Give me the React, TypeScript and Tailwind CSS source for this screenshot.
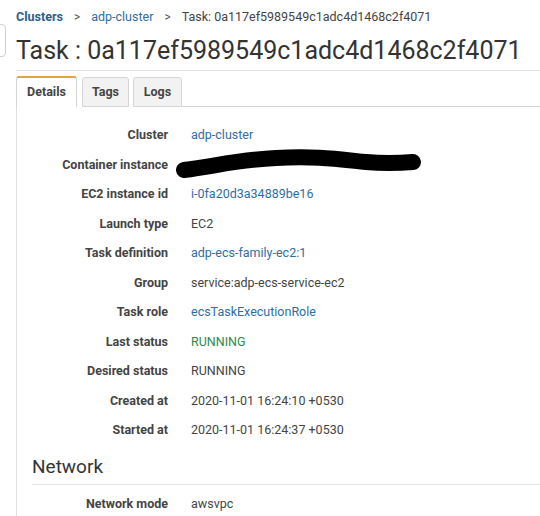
import React from "react";

const rows: { label: string; value: string; kind: "link" | "text" | "green" | "redact" }[] = [
  { label: "Cluster", value: "adp-cluster", kind: "link" },
  { label: "Container instance", value: "", kind: "redact" },
  { label: "EC2 instance id", value: "i-0fa20d3a34889be16", kind: "link" },
  { label: "Launch type", value: "EC2", kind: "text" },
  { label: "Task definition", value: "adp-ecs-family-ec2:1", kind: "link" },
  { label: "Group", value: "service:adp-ecs-service-ec2", kind: "text" },
  { label: "Task role", value: "ecsTaskExecutionRole", kind: "link" },
  { label: "Last status", value: "RUNNING", kind: "green" },
  { label: "Desired status", value: "RUNNING", kind: "text" },
  { label: "Created at", value: "2020-11-01 16:24:10 +0530", kind: "text" },
  { label: "Started at", value: "2020-11-01 16:24:37 +0530", kind: "text" },
];

function Row({ label, value, kind }: (typeof rows)[number]) {
  return (
    <div className="flex items-center h-[29.5px]">
      <div className="w-[151px] shrink-0 text-right font-bold text-[#444]">{label}</div>
      <div className="relative ml-[23px] flex-1 h-full flex items-center">
        {kind === "link" && <span className="text-[#2f6e9f]">{value}</span>}
        {kind === "text" && <span className="text-[#444]">{value}</span>}
        {kind === "green" && <span className="text-[#2d8a4a]">{value}</span>}
        {kind === "redact" && (
          <svg className="absolute left-[-15px] top-[-8px]" width="260" height="40" viewBox="0 0 260 40">
            <path
              d="M8 27 C 40 23, 60 17, 100 15 C 140 13, 160 16, 190 19 C 212 21, 225 20, 237 19"
              stroke="#000"
              strokeWidth="16"
              strokeLinecap="round"
              fill="none"
            />
          </svg>
        )}
      </div>
    </div>
  );
}

export default function App() {
  return (
    <div
      className="relative w-[540px] h-[516px] overflow-hidden bg-white text-[12.5px]"
      style={{ fontFamily: "Roboto, 'Liberation Sans', sans-serif" }}
    >
      {/* side handle */}
      <div className="absolute left-[-6px] top-[24px] w-[12px] h-[33px] border border-[#cfcfcf] rounded-[4px] bg-white" />

      {/* breadcrumb */}
      <div className="flex items-center h-[20px] mt-[7px] pl-[16px] text-[12.5px] whitespace-nowrap">
        <span className="font-bold text-[#2a5f8e]">Clusters</span>
        <span className="mx-[11px] text-[#555] text-[12px]">&gt;</span>
        <span className="text-[#2f6e9f]">adp-cluster</span>
        <span className="mx-[11px] text-[#555] text-[12px]">&gt;</span>
        <span className="text-[#444]">Task: 0a117ef5989549c1adc4d1468c2f4071</span>
      </div>

      {/* title */}
      <div className="pl-[16px] h-[36px] flex items-center mt-[5px] text-[25px] text-[#333] whitespace-nowrap leading-none">
        Task : 0a117ef5989549c1adc4d1468c2f4071
      </div>

      <div className="ml-[16px] mt-[2px] border-t border-[#e2e2e2]" />

      {/* tabs */}
      <div className="ml-[16px] mt-[5px] flex items-end h-[31px]">
        <div className="h-[31px] w-[61px] flex items-center justify-center font-bold text-[#444] bg-white border-t-2 border-t-[#e8a33c] border-l border-r border-[#d5d5d5] rounded-t-[3px]">
          Details
        </div>
        <div className="ml-[5px] h-[30px] w-[47px] flex items-center justify-center font-bold text-[#444] bg-[#f2f2f2] border border-[#d5d5d5] rounded-t-[3px]">
          Tags
        </div>
        <div className="ml-[4px] h-[30px] w-[49px] flex items-center justify-center font-bold text-[#444] bg-[#f2f2f2] border border-[#d5d5d5] rounded-t-[3px]">
          Logs
        </div>
        <div className="flex-1 border-b border-[#d5d5d5]" />
      </div>

      {/* panel */}
      <div className="ml-[16px] border-l border-[#e0e0e0] pt-[14px] h-[420px]">
        {rows.map((r) => (
          <Row key={r.label} {...r} />
        ))}
        <div className="ml-[15px] mt-[8px] text-[19px] text-[#333] leading-none h-[26px] flex items-center">
          Network
        </div>
        <div className="ml-[15px] mt-[4px] border-t border-[#e2e2e2]" />
        <div className="mt-[5px]">
          <Row label="Network mode" value="awsvpc" kind="text" />
        </div>
      </div>
    </div>
  );
}
